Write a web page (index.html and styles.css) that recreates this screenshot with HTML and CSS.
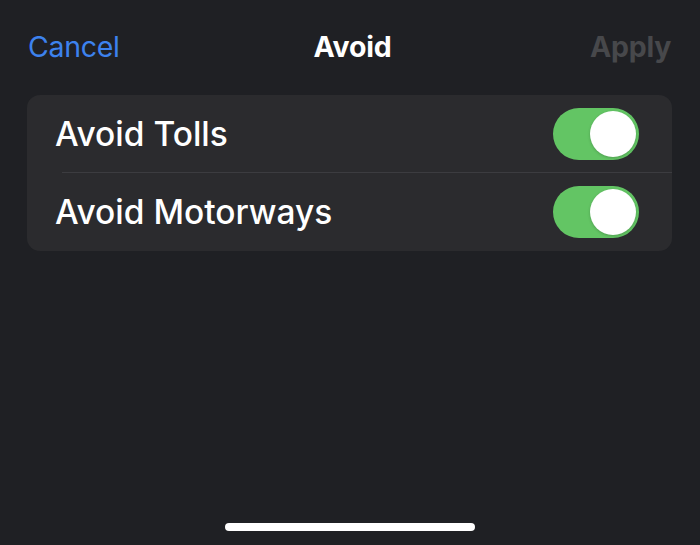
FILE: index.html
```html
<!DOCTYPE html>
<html>
<head>
<meta charset="utf-8">
<link rel="stylesheet" href="styles.css">
</head>
<body>
<div class="sheet">
  <header class="nav">
    <span class="nav-btn cancel">Cancel</span>
    <span class="nav-title">Avoid</span>
    <span class="nav-btn apply">Apply</span>
  </header>
  <section class="card">
    <div class="row">
      <span class="label">Avoid Tolls</span>
      <span class="toggle on"><span class="knob"></span></span>
    </div>
    <div class="sep"></div>
    <div class="row">
      <span class="label">Avoid Motorways</span>
      <span class="toggle on"><span class="knob"></span></span>
    </div>
  </section>
  <div class="spacer"></div>
  <div class="home-wrap"><div class="home"></div></div>
</div>
</body>
</html>
```
FILE: styles.css
```css
html, body {
  margin: 0;
  padding: 0;
  background: #1f2024;
}
body {
  width: 700px;
  height: 545px;
  overflow: hidden;
  font-family: Inter, "Noto Sans", "Liberation Sans", sans-serif;
  color: #ffffff;
}
.sheet {
  width: 700px;
  height: 545px;
  display: flex;
  flex-direction: column;
  background: #1f2024;
}
.nav {
  height: 95px;
  display: grid;
  grid-template-columns: 1fr auto 1fr;
  align-items: center;
  padding: 0 29px 2px 28px;
  box-sizing: border-box;
}
.nav-btn {
  font-size: 28.5px;
  letter-spacing: -0.3px;
}
.cancel {
  color: #3d82ee;
  justify-self: start;
}
.apply {
  color: #47484b;
  font-weight: 700;
  justify-self: end;
}
.nav-title {
  font-size: 28.5px;
  font-weight: 700;
  letter-spacing: -0.2px;
  padding-left: 6px;
}
.card {
  margin: 0 28px 0 27px;
  background: #2b2b2e;
  border-radius: 13px;
  display: flex;
  flex-direction: column;
}
.row {
  height: 77px;
  display: flex;
  align-items: center;
  justify-content: space-between;
  padding: 0 33px 0 28px;
}
.row + .sep + .row {
  height: 78px;
}
.label {
  font-size: 33.5px;
  font-weight: 500;
  letter-spacing: 0;
}
.sep {
  height: 1px;
  background: #3c3c40;
  margin-left: 35px;
}
.toggle {
  width: 86px;
  height: 52px;
  border-radius: 26px;
  background: #63c564;
  display: flex;
  align-items: center;
  justify-content: flex-end;
  padding: 0 3px;
  box-sizing: border-box;
}
.knob {
  width: 46px;
  height: 46px;
  border-radius: 50%;
  background: #ffffff;
  box-shadow: 0 1px 3px rgba(0,0,0,0.2);
}
.spacer {
  flex: 1;
}
.home-wrap {
  height: 22px;
  display: flex;
  justify-content: center;
}
.home {
  width: 250px;
  height: 8px;
  border-radius: 4px;
  background: #ffffff;
}
```
